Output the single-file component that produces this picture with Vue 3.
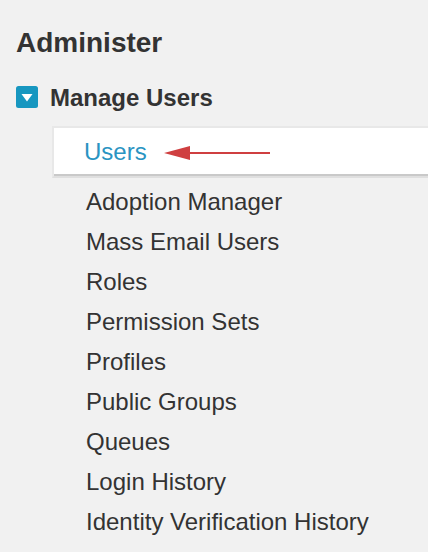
<script setup>
import { ref } from "vue";

const open = ref(true)
const active = ref("Users")

const links = ref([
  "Adoption Manager",
  "Mass Email Users",
  "Roles",
  "Permission Sets",
  "Profiles",
  "Public Groups",
  "Queues",
  "Login History",
  "Identity Verification History"
])
</script>

<template>
  <nav class="sidebar">
    <h2 class="title">Administer</h2>
    <div class="section" @click="open = !open">
      <svg class="toggle" width="22" height="22" viewBox="0 0 22 22">
        <rect width="22" height="22" rx="2.5" fill="#1797c0" />
        <path d="M5.5 8h11L11 15.5z" fill="#fff" />
      </svg>
      <span class="sectionName">Manage Users</span>
    </div>
    <div v-if="open">
      <div class="current">
        <a class="currentLink">{{ active }}</a>
        <svg class="arrow" width="106" height="14" viewBox="0 0 106 14">
          <path d="M0 7L26 0v14z" fill="#cf3f40" />
          <rect x="25" y="6" width="81" height="2" fill="#cf3f40" />
        </svg>
      </div>
      <ul class="links">
        <li v-for="link in links" :key="link">{{ link }}</li>
      </ul>
    </div>
  </nav>
</template>

<style>
body {
  background-color: #f1f1f1;
  overflow: hidden;
}
</style>

<style scoped>
.sidebar {
  box-sizing: border-box;
  height: 552px;
  padding-top: 27px;
  overflow: hidden;
  font-family: "Liberation Sans", Arial, sans-serif;
  font-size: 24px;
  color: #333;
  background-color: #f1f1f1;
}

.title {
  margin: 0 0 0 16px;
  font-size: 28px;
  line-height: 32px;
}

.section {
  display: flex;
  align-items: center;
  gap: 12px;
  height: 40px;
  margin-top: 19px;
  padding-left: 16px;
  cursor: pointer;
}

.toggle {
  margin-top: -2px;
}

.sectionName {
  font-weight: bold;
  line-height: 40px;
}

.current {
  display: flex;
  align-items: center;
  gap: 17px;
  box-sizing: border-box;
  height: 52px;
  margin: 8px 0 0 52px;
  padding-left: 30px;
  border-top: 2px solid #e8e8e8;
  border-left: 2px solid #e8e8e8;
  border-bottom: 2px solid #dfdfdf;
  background-color: #fff;
  box-shadow: inset 0 -2px 0 #c9c9c9;
}

.currentLink {
  line-height: 40px;
}

.currentLink {
  color: #2a94c2;
}

.arrow {
  margin-top: 2px;
}

.links {
  margin: 4px 0 0 86px;
  padding: 0;
  list-style: none;
}

.links li {
  line-height: 40px;
  white-space: nowrap;
}
</style>
